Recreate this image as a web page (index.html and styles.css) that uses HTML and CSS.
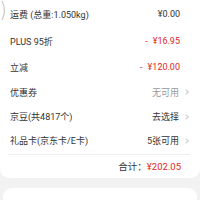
FILE: index.html
```html
<!DOCTYPE html>
<html>
<head>
<meta charset="utf-8">
<link rel="stylesheet" href="styles.css">
</head>
<body>
<div class="page">
  <div class="card">
    <svg class="edge" width="8" height="22" viewBox="0 0 8 22"><path d="M2 1 Q7 10 2 20" fill="none" stroke="#c8c8c8" stroke-width="1.2"/></svg>
    <div class="row r1"><span class="label">运费 (总重:1.050kg)</span><span class="val">¥0.00</span></div>
    <div class="row r2"><span class="label">PLUS 95折</span><span class="val red"><span class="dash">-</span>¥16.95</span></div>
    <div class="row r3"><span class="label">立减</span><span class="val red"><span class="dash">-</span>¥120.00</span></div>
    <div class="row r4"><span class="label">优惠券</span><span class="val gray">无可用<i class="chev"></i></span></div>
    <div class="row r5"><span class="label">京豆(共4817个)</span><span class="val">去选择<i class="chev"></i></span></div>
    <div class="row r6"><span class="label">礼品卡(京东卡/E卡)</span><span class="val">5张可用<i class="chev"></i></span></div>
    <div class="total"><span class="tl">合计：</span><span class="red">¥202.05</span></div>
  </div>
  <div class="card2"></div>
</div>
</body>
</html>
```
FILE: styles.css
```css
html, body {
  margin: 0;
  padding: 0;
  background: #f2f2f2;
}
body {
  width: 200px;
  height: 200px;
  overflow: hidden;
  font-family: Roboto, "Noto Sans CJK SC", sans-serif;
  font-size: 9px;
  color: #333;
}
.page {
  display: flex;
  flex-direction: column;
  gap: 10px;
}
.card {
  position: relative;
  background: #fff;
  border-radius: 0 0 9px 9px;
  padding: 0 10px 0 10px;
  height: 178px;
  box-sizing: border-box;
  display: flex;
  flex-direction: column;
}
.edge {
  position: absolute;
  left: 0;
  top: 0;
}
.row {
  display: flex;
  justify-content: space-between;
  align-items: center;
  height: 26px;
  padding-right: 10px;
}
.r1 { height: 28px; }
.r2 { height: 26px; }
.r3 { height: 26px; }
.r4 { height: 24px; }
.r5 { height: 25px; }
.r6 { height: 23px; }
.r4, .r5, .r6 { padding-right: 0; }
.val {
  display: flex;
  align-items: center;
}
.dash { margin-right: 5px; }
.red { color: #e1251b; }
.gray { color: #999; }
.chev {
  display: inline-block;
  width: 3px;
  height: 3px;
  border-top: 1px solid #ccc;
  border-right: 1px solid #ccc;
  transform: rotate(45deg);
  margin-left: 5px;
  margin-right: 2px;
}
.total {
  margin-top: 2px;
  margin-left: -2px;
  border-top: 1px solid #eeeeee;
  display: flex;
  justify-content: flex-end;
  align-items: center;
  height: 22px;
  padding-right: 9px;
  font-size: 9.5px;
}
.tl { color: #333; }
.card2 {
  background: #fff;
  border-radius: 9px 9px 0 0;
  height: 12px;
  margin: 0 3px;
}
```
